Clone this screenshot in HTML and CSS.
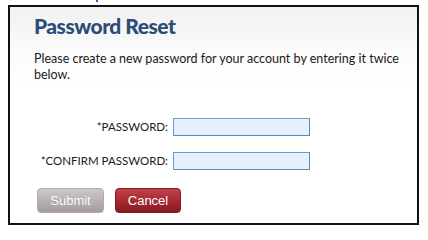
FILE: index.html
```html
<!DOCTYPE html>
<html>
<head>
<meta charset="utf-8">
<link rel="stylesheet" href="styles.css">
</head>
<body>
<div class="top-strip"><span class="top-mark"></span></div>
<div class="panel">
  <h1 class="title">Password Reset</h1>
  <p class="intro">Please create a new password for your account by entering it twice below.</p>
  <form class="form">
    <label class="label" for="pw">*PASSWORD:</label>
    <input class="field" id="pw" type="password">
    <label class="label" for="pw2">*CONFIRM PASSWORD:</label>
    <input class="field" id="pw2" type="password">
  </form>
  <div class="actions">
    <button class="btn btn-submit" type="button">Submit</button>
    <button class="btn btn-cancel" type="button">Cancel</button>
  </div>
</div>
</body>
</html>
```
FILE: styles.css
```css
html, body {
  margin: 0;
  padding: 0;
  background: #ffffff;
}
body {
  font-family: Lato, "Open Sans", sans-serif;
  color: #1a1a1a;
}
.top-strip {
  height: 5px;
  display: flex;
  align-items: flex-start;
}
.top-mark {
  display: block;
  width: 2px;
  height: 2px;
  margin-left: 96px;
  background: #2a62b8;
}
.panel {
  box-sizing: border-box;
  width: 411px;
  height: 220px;
  margin-left: 8px;
  border: 2px solid #111111;
  background: linear-gradient(to bottom, #f1f1f1 0px, #fbfbfb 45px, #ffffff 80px);
  padding: 0 0 0 24px;
}
.title {
  margin: 6px 0 0 0;
  font-size: 21px;
  line-height: 26px;
  font-weight: 900;
  letter-spacing: -0.5px;
  color: #2b4c78;
}
.intro {
  margin: 12px 0 0 0;
  font-size: 12.5px;
  line-height: 16px;
  width: 370px;
}
.form {
  display: grid;
  grid-template-columns: 134px 137px;
  column-gap: 5px;
  row-gap: 16px;
  margin-top: 35px;
  align-items: center;
}
.label {
  text-align: right;
  font-size: 11.5px;
  line-height: 18px;
  color: #1a1a1a;
}
.field {
  box-sizing: border-box;
  width: 137px;
  height: 18px;
  margin: 0;
  padding: 0;
  border: 1px solid #6f9dca;
  border-right-color: #5b89b8;
  border-bottom-color: #5b89b8;
  background: #e6f0fc;
}
.actions {
  display: flex;
  gap: 11px;
  margin-top: 18px;
  margin-left: 3px;
}
.btn {
  box-sizing: border-box;
  height: 25px;
  border-radius: 4px;
  font-family: "Liberation Sans", Arial, sans-serif;
  font-size: 13px;
  color: #ffffff;
  padding: 0;
  cursor: pointer;
  text-shadow: 0 0 1px rgba(0, 0, 0, 0.15);
}
.btn-submit {
  width: 67px;
  border: 1px solid #b3abab;
  background: linear-gradient(to bottom, #cdc8c8 0%, #b8b1b1 50%, #a59d9d 100%);
}
.btn-cancel {
  width: 66px;
  border: 1px solid #7c1c22;
  background: linear-gradient(to bottom, #c2414a 0%, #a92a33 50%, #861a22 100%);
}
```
